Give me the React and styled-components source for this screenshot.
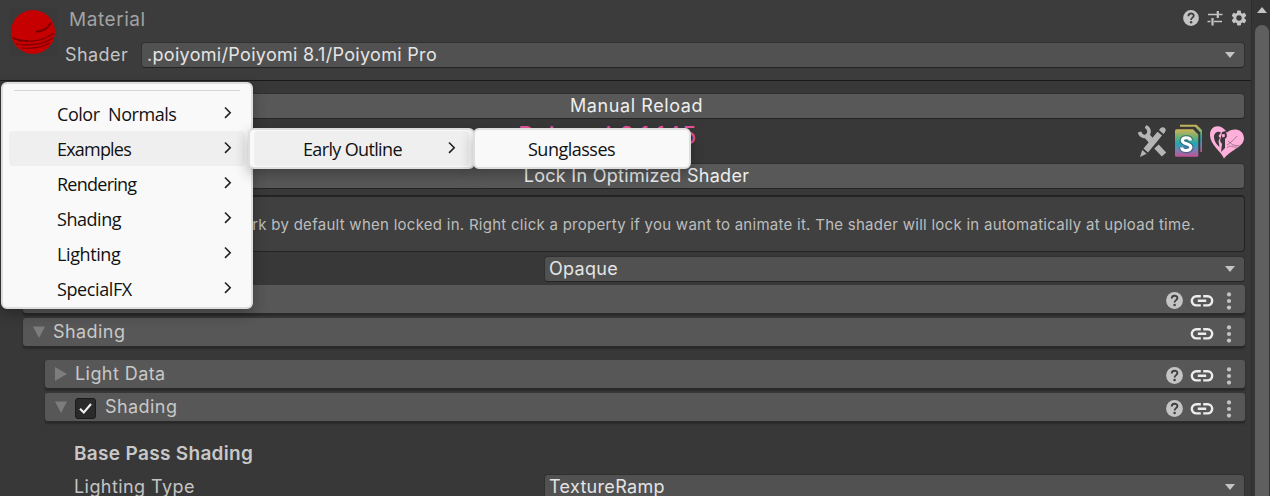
import React from "react";
import styled, { createGlobalStyle } from "styled-components";

const Global = createGlobalStyle`
  * { box-sizing: border-box; }
  body { margin: 0; background: #383838; overflow: hidden; }
`;

const Window = styled.div`
  position: relative;
  display: flex;
  width: 1270px;
  height: 496px;
  overflow: hidden;
  background: #383838;
  color: #c8c8c8;
  font: 18px/24px Inter, "Liberation Sans", sans-serif;
  letter-spacing: 0.43px;
  white-space: pre;
`;

const Inspector = styled.main`
  width: 1251px;
  flex: none;
`;

const Header = styled.header`
  display: flex;
  height: 81px;
  padding: 8px 6px 0 9px;
  background: #3c3c3c;
  border-bottom: 1px solid #1a1a1a;
`;

const Preview = styled.svg`
  width: 48px;
  height: 48px;
  flex: none;
`;

const HeaderBody = styled.div`
  flex: 1;
  padding-left: 8px;
`;

const TitleRow = styled.div`
  display: flex;
  height: 34px;
  justify-content: space-between;
  padding-left: 4px;
  color: #a3a3a3;
  font-size: 19px;
  letter-spacing: 0.55px;
`;

const HeaderIcons = styled.div`
  display: flex;
  align-items: center;
  height: 20px;
  gap: 8px;
  margin-right: -2px;
`;

const Field = styled.div`
  display: flex;
  align-items: center;
  height: 26px;
  padding-left: ${(p) => p.$indent || 0}px;
`;

const Label = styled.span`
  width: ${(p) => p.$width}px;
  flex: none;
  color: #c4c4c4;
`;

const Dropdown = styled.div`
  display: flex;
  flex: 1;
  align-items: center;
  justify-content: space-between;
  height: 26px;
  padding: 0 9px 0 ${(p) => p.$inset ?? 4}px;
  background: #515151;
  border: 1px solid #303030;
  border-bottom-color: #242424;
  border-radius: 4px;
  color: #e4e4e4;
  letter-spacing: 0.31px;
`;

const Caret = styled.span`
  border: 5.5px solid transparent;
  border-top: 6px solid #c4c4c4;
  border-bottom: 0;
`;

const Body = styled.div`
  padding: 12px 6px 0 0;
`;

const WideButton = styled.div`
  height: 26px;
  margin-left: 22px;
  padding-left: 6px;
  background: #585858;
  border: 1px solid #303030;
  border-bottom-color: #242424;
  border-radius: 4px;
  color: #eeeeee;
  text-align: center;
  letter-spacing: ${(p) => p.$spacing ?? 0.6}px;
`;

const VersionRow = styled.div`
  display: flex;
  height: 44px;
  align-items: center;
`;

const Version = styled.h1`
  flex: 1;
  margin: -10px 0 0 78px;
  text-align: center;
  color: #e8549c;
  font-size: 24px;
  font-weight: 400;
  letter-spacing: 0.6px;
`;

const Tools = styled.div`
  display: flex;
  flex: none;
  gap: 4px;
`;

const HelpBox = styled.div`
  height: 57px;
  margin: 6px 0 4px 22px;
  padding-right: 49px;
  background: #404040;
  border: 1px solid #232323;
  border-top-width: 2px;
  border-radius: 4px;
  color: #bdbdbd;
  font-size: 15px;
  line-height: 56px;
  text-align: right;
  letter-spacing: 0.27px;
`;

const Section = styled.div`
  display: flex;
  align-items: center;
  height: 28px;
  margin: ${(p) => p.$top}px 0 0 ${(p) => p.$left}px;
  padding: 0 8.500px 0 8.500px;
  background: #575757;
  border-radius: 3px;
  box-shadow: 0 2px 1px #2a2a2a, 0 3px 2px #2c2c2c;
`;

const Foldout = styled.svg`
  width: 14px;
  height: 14px;
  flex: none;
  fill: #7d7d7d;
`;

const SectionTitle = styled.span`
  flex: 1;
  padding-left: ${(p) => p.$gap ?? 7.5}px;
`;

const SectionIcons = styled.div`
  display: flex;
  align-items: center;
  gap: 7px;
  padding-top: 3px;
`;

const Checkbox = styled.span`
  display: grid;
  place-items: center;
  width: 21px;
  height: 21px;
  margin: 2px 0 0 7.5px;
  background: #2a2a2a;
  border: 1px solid #1b1b1b;
  border-radius: 3px;
`;

const Heading = styled.h2`
  margin: 21px 0 8px 74px;
  font-size: 19px;
  font-weight: 600;
  line-height: 24px;
  color: #c8c8c8;
  letter-spacing: 0.32px;
`;

const Scrollbar = styled.aside`
  width: 19px;
  padding: 7px 1px 0 4px;
  background: #353535;
  border-left: 1px solid #2e2e2e;
`;

const ScrollArrow = styled.div`
  width: 0;
  margin-left: 1px;
  border: 5px solid transparent;
  border-top: 0;
  border-bottom: 6px solid #c4c4c4;
`;

const Thumb = styled.div`
  height: 500px;
  margin: 12px 0 0 -1px;
  background: #5f5f5f;
  border-radius: 7px;
`;

const Menu = styled.nav`
  position: absolute;
  left: ${(p) => p.$x}px;
  top: ${(p) => p.$y}px;
  width: ${(p) => p.$width}px;
  padding: ${(p) => p.$pad || "1px 4px"};
  background: #f9f9f9;
  border: 2px solid #dedede;
  border-radius: 6px;
  box-shadow: 0 5px 14px rgba(0, 0, 0, 0.28);
  color: #111;
  font: 18px/35px "Open Sans", "Noto Sans", sans-serif;
`;

const Separator = styled.hr`
  height: 1px;
  margin: 0 5px 5px 5px;
  border: 0;
  background: #d5d5d5;
`;

const Item = styled.div`
  display: flex;
  align-items: center;
  justify-content: space-between;
  height: 35px;
  padding: 1px 12.500px 0 ${(p) => p.$start ?? 48}px;
  border-radius: 4px;
  background: ${(p) => (p.$active ? "#efefef" : "transparent")};
  letter-spacing: ${(p) => p.$spacing ?? -0.5}px;
`;

const ChevronIcon = styled.svg`
  width: 10px;
  height: 14px;
  margin-bottom: 3px;
`;

const Chevron = () => (
  <ChevronIcon viewBox="0 0 10 14">
    <path d="M2 1.500 7.200 6.700 2 11.900" fill="none" stroke="#222" strokeWidth="1.600" />
  </ChevronIcon>
);

const Help = ({ size = 17 }) => (
  <svg width={size} height={size} viewBox="0 0 17 17">
    <circle cx="8.5" cy="8.5" r="8.400" fill="#c4c4c4" />
    <path d="M5.700 6.600c0-3.800 5.700-3.700 5.700-.5 0 2-2.800 2.100-2.800 4.400" fill="none" stroke="#404040" strokeWidth="1.900" />
    <circle cx="8.6" cy="13" r="1.3" fill="#404040" />
  </svg>
);

const Presets = () => (
  <svg width="16" height="16" viewBox="0 0 16 16" fill="none" stroke="#c4c4c4">
    <path d="M1 4.500h9M12 4.500h3.500M.5 11.500h3M7 11.500h8" strokeWidth="1.400" />
    <path d="M10.800 1v7M5.500 8v7.400" strokeWidth="2.200" />
  </svg>
);

const Gear = () => (
  <svg width="16" height="16" viewBox="0 0 16 16">
    <g fill="#c4c4c4">
      <rect x="6" y=".5" width="4" height="15" rx="1" />
      <rect x="6" y=".5" width="4" height="15" rx="1" transform="rotate(60 8 8)" />
      <rect x="6" y=".5" width="4" height="15" rx="1" transform="rotate(120 8 8)" />
      <circle cx="8" cy="8" r="5.6" />
    </g>
    <circle cx="8" cy="8" r="2.7" fill="#3c3c3c" />
  </svg>
);

const Link = () => (
  <svg width="24" height="14" viewBox="0 0 24 14" fill="none" stroke="#ededed" strokeWidth="2.400">
    <path d="M10.800 2.200H6.400a4.600 4.600 0 0 0 0 9.200h4.400M13.200 2.200h4.400a4.600 4.600 0 0 1 0 9.200h-4.400M7.800 6.800h8.400" />
  </svg>
);

const Dots = () => (
  <svg width="16" height="18" viewBox="0 0 16 18" fill="#c4c4c4">
    <circle cx="8" cy="2.4" r="2.1" />
    <circle cx="8" cy="9" r="2.1" />
    <circle cx="8" cy="15.6" r="2.1" />
  </svg>
);

const Wrench = () => (
  <svg width="32" height="36" viewBox="0 0 32 36">
    <path d="M8.500 3.500c6 3 3.500 11-2 9.800Q3.500 12.500 2.500 9" fill="none" stroke="#b5b5b5" strokeWidth="3.600" />
    <path d="m10 13 4 4.500M19.500 23.500l7.500 8" fill="none" stroke="#b5b5b5" strokeWidth="6" />
    <path d="M20.500 8.800 25 12.500 11 29.500 6.500 25.500zM5.300 27l4.300 3.800L3 34zM22 7l1.700-2q2.200-1.700 4.200 0 1.700 2 .2 4l-1.700 2z" fill="#b5b5b5" />
  </svg>
);

const Docs = () => (
  <svg width="32" height="36" viewBox="0 0 32 36">
    <defs>
      <linearGradient id="rainbow" x1="0" y1="0" x2="0" y2="1">
        <stop offset="0" stopColor="#d0b457" />
        <stop offset=".28" stopColor="#6fb070" />
        <stop offset=".52" stopColor="#20a6b5" />
        <stop offset=".72" stopColor="#6986b6" />
        <stop offset="1" stopColor="#c94f94" />
      </linearGradient>
    </defs>
    <path d="M7 1.700h16.500L29 7v22h-1.700V9.500L22 3.800H7z" fill="url(#rainbow)" />
    <path d="M3.500 6.200H20l5.300 5.300v21q0 1.300-1.300 1.300H3.500Q2 33.800 2 32.500V7.700Q2 6.200 3.500 6.200z" fill="url(#rainbow)" />
    <path d="M17.500 17.500c-.5-3.600-8.200-3.700-8.200 0 0 4.200 8.600 2.300 8.600 6.800 0 4.300-8.900 4.100-9.300 0" fill="none" stroke="#28536f" strokeWidth="5.500" opacity=".6" />
    <path d="M17.500 17.500c-.5-3.600-8.200-3.700-8.200 0 0 4.200 8.600 2.300 8.600 6.800 0 4.300-8.900 4.100-9.300 0" fill="none" stroke="#fff" strokeWidth="3.100" />
  </svg>
);

const Heart = () => (
  <svg width="36" height="36" viewBox="0 0 36 36">
    <path d="M15 35.500C12 28 1 22 1 12 1 2 12 0 18 9.500 23 5 34 5 35 15 35 24 23 26 15 35.500z" fill="#ffb0da" />
    <path d="M12 9.500c-4-2-7.500 1-7 5.500.5 4 3 7 5.500 9l-1-6 1.500-3-1.500-2zM13 9l4-1 1 5.500-2 2.500v9l-4 4 1-8-2-3z" fill="#3d363c" />
    <path d="m12.500 11.500 3-.5.500 2.500-2.500 1z" fill="#ffb0da" />
    <path d="M18 22c3-2 7-5 10-9M19 18l5 4 7 1M18 25c3-4 6 0 10-1" fill="none" stroke="#94687f" strokeWidth=".8" />
  </svg>
);

const SectionBar = ({ top, left, title, help, open, checked }) => (
  <Section $top={top} $left={left}>
    <Foldout viewBox="0 0 14 14">
      <path d={open ? "M1 1.500h12L7 13z" : "M1 0v14l12-7z"} />
    </Foldout>
    {checked && (
      <Checkbox>
        <svg width="15" height="13" viewBox="0 0 15 13">
          <path d="m2 6.700 3.800 3.800L13 2" fill="none" stroke="#efefef" strokeWidth="2.100" />
        </svg>
      </Checkbox>
    )}
    <SectionTitle $gap={checked ? 9 : 7.5}>{title}</SectionTitle>
    <SectionIcons>
      {help && <Help />}
      <Link />
      <Dots />
    </SectionIcons>
  </Section>
);

const entries = [
  ["Color  Normals", -0.45],
  ["Examples", -0.8],
  ["Rendering", -0.75],
  ["Shading", -0.45],
  ["Lighting", -0.4],
  ["SpecialFX", -0.4],
];

export default function App() {
  return (
    <Window>
      <Global />
      <Inspector>
        <Header>
          <Preview viewBox="0 0 48 48">
            <rect width="48" height="48" fill="#3a3a3a" />
            <circle cx="24" cy="24" r="22" fill="#c60000" />
            <g fill="none" stroke="#7a0000" strokeWidth="1.200">
              <path d="M17 33c12 1 21-3 28-8M7 36c14 2 28 0 37-6M12 40c12 1 22-1 29-5" />
              <path d="M27 23.500c7 0 12-3 15-9M4 29.500c4 3.500 9 3.500 15 3.500" strokeWidth="2" />
            </g>
          </Preview>
          <HeaderBody>
            <TitleRow>
              <span>Material</span>
              <HeaderIcons>
                <Help size={16} />
                <Presets />
                <Gear />
              </HeaderIcons>
            </TitleRow>
            <Field>
              <Label $width={76}>Shader</Label>
              <Dropdown $inset={5}>
                .poiyomi/Poiyomi 8.1/Poiyomi Pro
                <Caret />
              </Dropdown>
            </Field>
          </HeaderBody>
        </Header>
        <Body>
          <WideButton>Manual Reload</WideButton>
          <VersionRow>
            <Version>Poiyomi 8.1.145</Version>
            <Tools>
              <Wrench />
              <Docs />
              <Heart />
            </Tools>
          </VersionRow>
          <WideButton $spacing={0.28}>Lock In Optimized Shader</WideButton>
          <HelpBox>
            Animations don't work by default when locked in. Right click a property if you want to animate it. The shader will lock in automatically at upload time.
          </HelpBox>
          <Field>
            <Label $width={544} />
            <Dropdown>
              Opaque
              <Caret />
            </Dropdown>
          </Field>
          <SectionBar top={3} left={23} help />
          <SectionBar top={5} left={23} title="Shading" open />
          <SectionBar top={14} left={45} title="Light Data" help />
          <SectionBar top={5} left={45} title="Shading" help open checked />
          <Heading>Base Pass Shading</Heading>
          <Field $indent={74}>
            <Label $width={470}>Lighting Type</Label>
            <Dropdown>
              TextureRamp
              <Caret />
            </Dropdown>
          </Field>
        </Body>
      </Inspector>
      <Scrollbar>
        <ScrollArrow />
        <Thumb />
      </Scrollbar>
      <Menu $x={1} $y={82} $width={252} $pad="6px 6px 1px">
        <Separator />
        {entries.map(([name, spacing]) => (
          <Item key={name} $active={name === "Examples"} $spacing={spacing}>
            {name}
            <Chevron />
          </Item>
        ))}
      </Menu>
      <Menu $x={248} $y={128} $width={227}>
        <Item $active $start={49} $spacing={-0.65}>
          Early Outline
          <Chevron />
        </Item>
      </Menu>
      <Menu $x={473} $y={128} $width={218}>
        <Item $start={49}>Sunglasses</Item>
      </Menu>
    </Window>
  );
}
